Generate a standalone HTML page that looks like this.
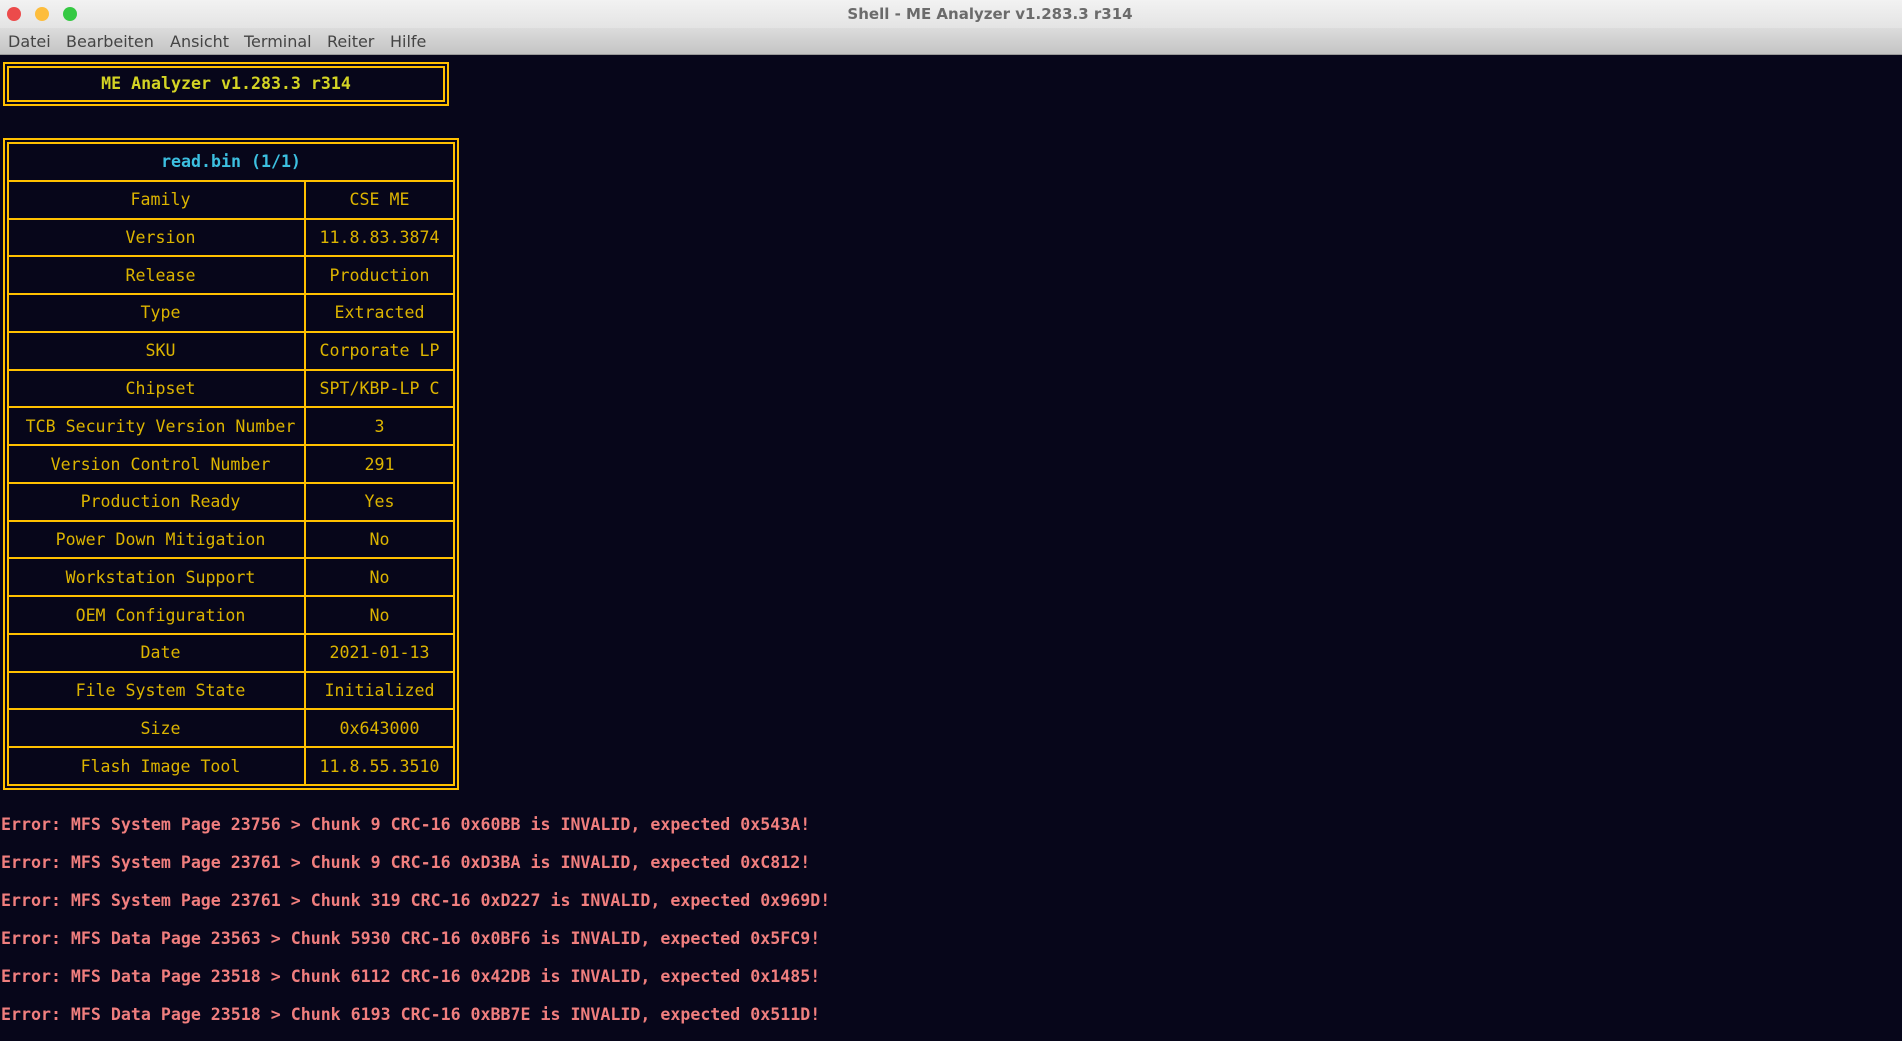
<!DOCTYPE html>
<html><head><meta charset="utf-8">
<style>
html,body{margin:0;padding:0;width:1902px;height:1041px;overflow:hidden;background:#07061a;}
.titlebar{position:absolute;left:0;top:0;width:1902px;height:28px;background:linear-gradient(#f2f2f2,#e4e4e4);}
.titlebar .t{position:absolute;left:0;width:1980px;top:5px;text-align:center;font:bold 15px "DejaVu Sans","Liberation Sans",sans-serif;color:#6b6b6b;}
.dot{position:absolute;top:7px;width:14px;height:14px;border-radius:50%;}
.menubar{position:absolute;left:0;top:28px;width:1902px;height:26px;background:linear-gradient(#dcdcdc,#c4c4c4);border-bottom:1px solid #9a9a9a;}
.menubar span{position:absolute;top:4px;font:16px "DejaVu Sans","Liberation Sans",sans-serif;color:#444;}
.mono{font-family:"DejaVu Sans Mono","Liberation Mono",monospace;font-size:16.6px;}
.box{position:absolute;border:2.5px solid #ffc000;box-sizing:border-box;}
.tbl{position:absolute;left:7px;top:142px;width:448px;height:644px;box-sizing:border-box;border:2.5px solid #ffc000;display:flex;flex-direction:column;}
.row{flex:1;display:flex;border-top:2.5px solid #ffc000;color:#dcb400;}
.row:first-child{border-top:none;}
.c1{width:297px;border-right:2.5px solid #ffc000;display:flex;align-items:center;justify-content:center;padding-left:8px;box-sizing:border-box;white-space:nowrap;}
.c2{flex:1;display:flex;align-items:center;justify-content:center;white-space:nowrap;}
.h{color:#3cbfe0;font-weight:bold;justify-content:center;align-items:center;}
.err{position:absolute;left:1px;color:#f07e7e;font-weight:bold;white-space:pre;}
</style></head><body>
<div class="titlebar">
<div class="dot" style="left:7px;background:#ec4b4b;"></div>
<div class="dot" style="left:35px;background:#fdbd3c;"></div>
<div class="dot" style="left:63px;background:#35c943;"></div>
<div class="t">Shell - ME Analyzer v1.283.3 r314</div>
</div>
<div class="menubar">
<span style="left:8px">Datei</span>
<span style="left:66px">Bearbeiten</span>
<span style="left:170px">Ansicht</span>
<span style="left:244px">Terminal</span>
<span style="left:327px">Reiter</span>
<span style="left:390px">Hilfe</span>
</div>

<div class="box" style="left:3px;top:62px;width:446px;height:44px;"></div>
<div class="box" style="left:7px;top:66px;width:438px;height:36px;"></div>
<div class="mono" style="position:absolute;left:7px;top:74px;width:438px;text-align:center;color:#d4d424;font-weight:bold;">ME Analyzer v1.283.3 r314</div>

<div class="box" style="left:3px;top:138px;width:456px;height:652px;"></div>
<div class="tbl mono">
<div class="row h" style="display:flex">read.bin (1/1)</div>
<div class="row"><div class="c1">Family</div><div class="c2">CSE ME</div></div>
<div class="row"><div class="c1">Version</div><div class="c2">11.8.83.3874</div></div>
<div class="row"><div class="c1">Release</div><div class="c2">Production</div></div>
<div class="row"><div class="c1">Type</div><div class="c2">Extracted</div></div>
<div class="row"><div class="c1">SKU</div><div class="c2">Corporate LP</div></div>
<div class="row"><div class="c1">Chipset</div><div class="c2">SPT/KBP-LP C</div></div>
<div class="row"><div class="c1">TCB Security Version Number</div><div class="c2">3</div></div>
<div class="row"><div class="c1">Version Control Number</div><div class="c2">291</div></div>
<div class="row"><div class="c1">Production Ready</div><div class="c2">Yes</div></div>
<div class="row"><div class="c1">Power Down Mitigation</div><div class="c2">No</div></div>
<div class="row"><div class="c1">Workstation Support</div><div class="c2">No</div></div>
<div class="row"><div class="c1">OEM Configuration</div><div class="c2">No</div></div>
<div class="row"><div class="c1">Date</div><div class="c2">2021-01-13</div></div>
<div class="row"><div class="c1">File System State</div><div class="c2">Initialized</div></div>
<div class="row"><div class="c1">Size</div><div class="c2">0x643000</div></div>
<div class="row"><div class="c1">Flash Image Tool</div><div class="c2">11.8.55.3510</div></div>
</div>

<div class="err mono" style="top:815px">Error: MFS System Page 23756 > Chunk 9 CRC-16 0x60BB is INVALID, expected 0x543A!</div>
<div class="err mono" style="top:853px">Error: MFS System Page 23761 > Chunk 9 CRC-16 0xD3BA is INVALID, expected 0xC812!</div>
<div class="err mono" style="top:891px">Error: MFS System Page 23761 > Chunk 319 CRC-16 0xD227 is INVALID, expected 0x969D!</div>
<div class="err mono" style="top:929px">Error: MFS Data Page 23563 > Chunk 5930 CRC-16 0x0BF6 is INVALID, expected 0x5FC9!</div>
<div class="err mono" style="top:967px">Error: MFS Data Page 23518 > Chunk 6112 CRC-16 0x42DB is INVALID, expected 0x1485!</div>
<div class="err mono" style="top:1005px">Error: MFS Data Page 23518 > Chunk 6193 CRC-16 0xBB7E is INVALID, expected 0x511D!</div>
</body></html>
